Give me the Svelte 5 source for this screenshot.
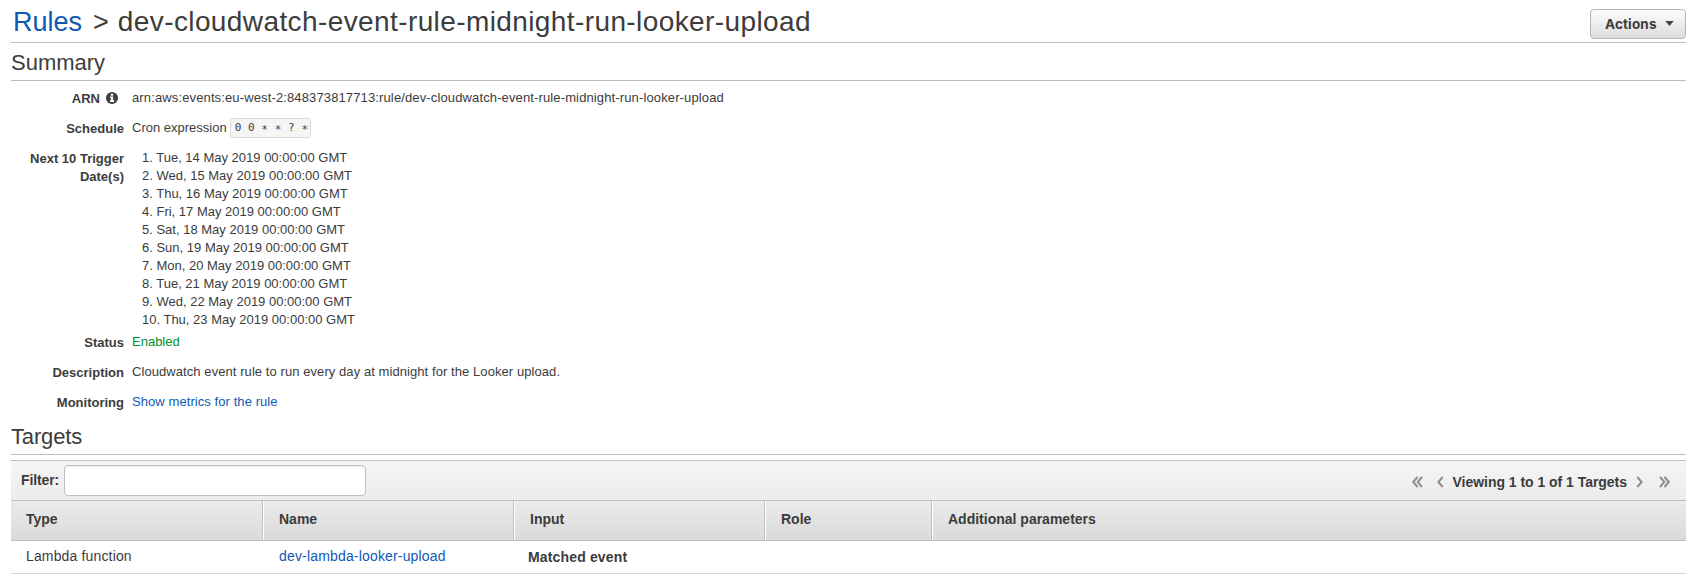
<script>
  const dates = ['Tue, 14', 'Wed, 15', 'Thu, 16', 'Fri, 17', 'Sat, 18', 'Sun, 19', 'Mon, 20', 'Tue, 21', 'Wed, 22', 'Thu, 23'];
  const columns = ['Type', 'Name', 'Input', 'Role', 'Additional parameters'];
</script>

<main>
  <header>
    <h1><a href="#rules">Rules</a><span class="sep">&gt;</span><span class="name">dev-cloudwatch-event-rule-midnight-run-looker-upload</span></h1>
    <button class="actions">Actions<svg width="9" height="5" viewBox="0 0 9 5"><path d="M.3 0h8.400L4.500 5z" fill="#444" /></svg></button>
  </header>
  <h2>Summary</h2>
  <dl>
    <dt>ARN<svg class="info" width="12" height="12" viewBox="0 0 13 13"><circle cx="6.5" cy="6.5" r="6.500" fill="#3c3c3c" /><path d="M5.2 1.800h2.600v2.200H5.200zM4.200 4.900h3.600v4h1.100v1.800H4.200V8.900h1.100V6.600H4.200z" fill="#fff" /></svg></dt>
    <dd class="arn">arn:aws:events:eu-west-2:848373817713:rule/dev-cloudwatch-event-rule-midnight-run-looker-upload</dd>
    <dt>Schedule</dt>
    <dd>Cron expression<code>0 0 <i>*</i> <i>*</i> ? <i>*</i></code></dd>
    <dt>Next 10 Trigger<br />Date(s)</dt>
    <dd class="dates">
      {#each dates as d, i}<div>{i + 1}. {d} May 2019 00:00:00 GMT</div>{/each}
    </dd>
    <dt>Status</dt>
    <dd class="ok">Enabled</dd>
    <dt>Description</dt>
    <dd class="wide">Cloudwatch event rule to run every day at midnight for the Looker upload.</dd>
    <dt>Monitoring</dt>
    <dd class="wide"><a href="#metrics">Show metrics for the rule</a></dd>
  </dl>
  <h2 class="targets">Targets</h2>
  <section>
    <div class="toolbar">
      <label><span>Filter:</span><input type="text" /></label>
      <nav>
        <svg width="11" height="12" viewBox="0 0 11 12"><path d="M5.5 1L1.2 6l4.300 5M10 1L5.700 6l4.300 5" /></svg>
        <svg class="prev" width="7" height="12" viewBox="0 0 7 12"><path d="M5.800 1L1.300 6l4.500 5" /></svg>
        <span>Viewing 1 to 1 of 1 Targets</span>
        <svg class="next" width="7" height="12" viewBox="0 0 7 12"><path d="M1.200 1l4.500 5-4.500 5" /></svg>
        <svg width="11" height="12" viewBox="0 0 11 12"><path d="M1 1l4.300 5L1 11M5.500 1l4.300 5-4.300 5" /></svg>
      </nav>
    </div>
    <div class="row head">
      {#each columns as c}<div>{c}</div>{/each}
    </div>
    <div class="row body">
      <div class="type">Lambda function</div>
      <div class="link"><a href="#lambda">dev-lambda-looker-upload</a></div>
      <div class="matched">Matched event</div>
      <div></div>
      <div></div>
    </div>
  </section>
</main>

<style>
  :global(body) { background: #fff; }
  main {
    box-sizing: border-box;
    width: 1692px;
    height: 587px;
    padding: 0 6px 0 11px;
    overflow: hidden;
    font: 13px/18px "Liberation Sans", Arial, sans-serif;
    color: #3c3c3c;
    white-space: nowrap;
  }
  a { color: #0f58b5; text-decoration: none; }
  header {
    display: flex;
    justify-content: space-between;
    box-sizing: border-box;
    height: 43px;
    border-bottom: 1px solid #bcbcbc;
  }
  h1 { margin: 0; padding: 6px 0 0 2px; font-size: 27px; line-height: 32px; font-weight: 400; display: flex; }
  .sep { margin: 0 9px 0 11px; }
  .name { font-size: 28px; letter-spacing: .4px; }
  .actions {
    display: flex;
    align-items: center;
    gap: 8px;
    box-sizing: border-box;
    width: 96px;
    height: 30px;
    margin: 9px 0 0;
    padding: 0 0 1px 14px;
    border: 1px solid #b4b4b4;
    border-radius: 4px;
    background: linear-gradient(#fdfdfd, #dcdcdc);
    color: #3c3c3c;
    font: 700 13.500px Inter, sans-serif;
    letter-spacing: .15px;
  }
  h2 { margin: 0; box-sizing: border-box; height: 38px; padding-top: 6px; font-size: 22px; line-height: 28px; font-weight: 400; border-bottom: 1px solid #bcbcbc; }
  dl { display: grid; grid-template-columns: 113px 1fr; column-gap: 8px; grid-template-rows: 30px 30px 184px 30px 30px 30px; margin: 8px 0 0; }
  dt { text-align: right; font-weight: 700; padding-top: 1px; }
  dd { margin: 0; }
  .arn { letter-spacing: .13px; }
  .wide { letter-spacing: .073px; }
  .info { margin-left: 6px; margin-right: 6px; vertical-align: -1px; }
  code {
    display: inline-block;
    box-sizing: border-box;
    width: 81px;
    height: 20px;
    margin-left: 3px;
    padding-left: 4px;
    border: 1px solid #dadada;
    border-radius: 3px;
    background: #f5f5f5;
    font: 11px/17px "DejaVu Sans Mono", monospace;
    letter-spacing: .05px;
    vertical-align: top;
    margin-top: -1px;
  }
  code i { font-style: normal; position: relative; top: 2px; }
  dd.dates { padding-left: 10px; }
  .ok { color: #00922a; }
  h2.targets { height: 32px; padding-top: 0; letter-spacing: -.15px; }
  section { margin-top: 5px; }
  .toolbar {
    display: flex;
    justify-content: space-between;
    box-sizing: border-box;
    height: 41px;
    border: solid #bfbfbf;
    border-width: 1px 0;
    background: linear-gradient(#f5f5f5, #ececec);
    font-weight: 700;
    font-size: 14px;
  }
  label { display: flex; gap: 5px; padding: 4px 0 0 10px; line-height: 30px; letter-spacing: -.13px; }
  input { box-sizing: border-box; width: 302px; height: 31px; border: 1px solid #bfbfbf; border-radius: 4px; background: #fff; box-shadow: inset 0 1px 1px #eee; margin: 0; }
  nav { display: flex; align-items: center; padding-right: 16px; padding-top: 3px; }
  nav span { letter-spacing: -.03px; }
  nav svg { fill: none; stroke: #8e8e8e; stroke-width: 2; }
  .prev { margin: 0 9px 0 14px; }
  .next { margin: 0 16px 0 9px; }
  .row { display: grid; grid-template-columns: 252px 251px 251px 167px 1fr; box-sizing: border-box; font-size: 14px; }
  .head { height: 40px; border-bottom: 1px solid #bfbfbf; background: linear-gradient(#ebebeb, #dadada); font-weight: 700; line-height: 37px; }
  .head div { padding-left: 15px; border-right: 1px solid #bfbfbf; }
  .head div + div { border-left: 1px solid #fff; }
  .head div:last-child { border-right: 0; }
  .body { height: 33px; border-bottom: 1px solid #d6d6d6; line-height: 31px; }
  .body .type { padding-left: 15px; letter-spacing: .15px; }
  .body .link { padding-left: 16px; letter-spacing: .17px; }
  .body .matched { padding: 1px 0 0 14px; font-weight: 700; letter-spacing: .15px; }
</style>
